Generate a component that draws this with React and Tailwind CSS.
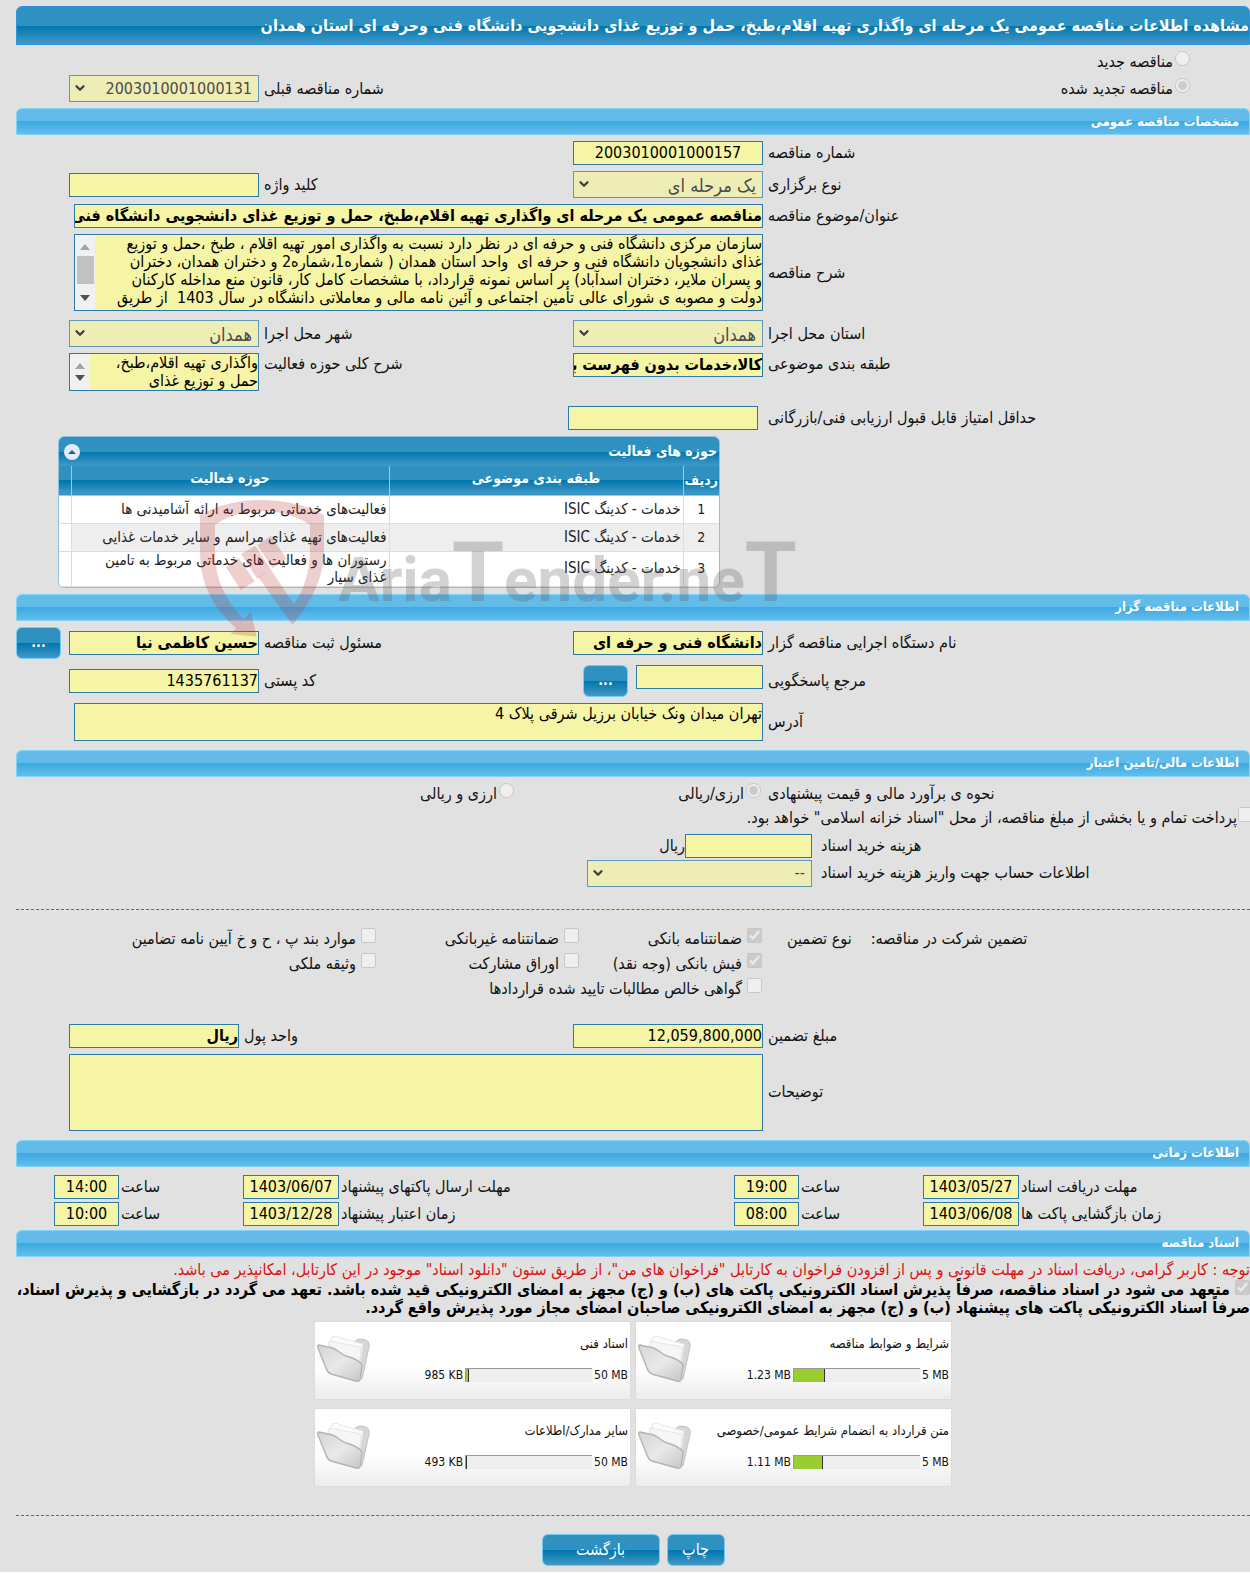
import React from "react";
import { ChevronDown } from "lucide-react";
import clsx from "clsx";

const BAR_BG =
  "bg-[linear-gradient(to_bottom,#63bbea_0%,#63bbea_49%,#3aaae3_50%,#66bdeb_100%)]";
const DARK_BG =
  "bg-[linear-gradient(to_bottom,#2f91c0_0%,#2f91c0_50%,#0076ae_51%,#4399c6_100%)]";

const activities = [
  { id: 1, category: "خدمات - کدینگ ISIC", field: "فعالیت‌های خدماتی مربوط به ارائه آشامیدنی ها" },
  { id: 2, category: "خدمات - کدینگ ISIC", field: "فعالیت‌های تهیه غذای مراسم و سایر خدمات غذایی" },
  { id: 3, category: "خدمات - کدینگ ISIC", field: "رستوران ها و فعالیت های خدماتی مربوط به تامین غذای سیار" },
];

const guarantees = [
  [
    { label: "ضمانتنامه بانکی", checked: true },
    { label: "ضمانتنامه غیربانکی" },
    { label: "موارد بند پ ، ح و خ آیین نامه تضامین" },
  ],
  [
    { label: "فیش بانکی (وجه نقد)", checked: true },
    { label: "اوراق مشارکت" },
    { label: "وثیقه ملکی" },
  ],
  [{ label: "گواهی خالص مطالبات تایید شده قراردادها" }],
];

const schedule = [
  {
    id: "row1",
    first: { label: "مهلت دریافت اسناد", date: "1403/05/27", time: "19:00" },
    second: { label: "مهلت ارسال پاکتهای پیشنهاد", date: "1403/06/07", time: "14:00" },
  },
  {
    id: "row2",
    first: { label: "زمان بازگشایی پاکت ها", date: "1403/06/08", time: "08:00" },
    second: { label: "زمان اعتبار پیشنهاد", date: "1403/12/28", time: "10:00" },
  },
];

const documents = [
  { title: "شرایط و ضوابط مناقصه", max: "5 MB", size: "1.23 MB", percent: 25 },
  { title: "اسناد فنی", max: "50 MB", size: "985 KB", percent: 2 },
  { title: "متن قرارداد به انضمام شرایط عمومی/خصوصی", max: "5 MB", size: "1.11 MB", percent: 23 },
  { title: "سایر مدارک/اطلاعات", max: "50 MB", size: "493 KB", percent: 1 },
];

const SectionBar = ({ children }) => (
  <h2
    className={clsx(
      "flex h-[27px] items-center rounded-t-md border border-[#7fd5f8] pr-[10px] text-[13px] font-bold text-white",
      BAR_BG
    )}
  >
    {children}
  </h2>
);

const Row = ({ className, children }) => (
  <div className={clsx("grid grid-cols-[1fr_190px_314px_190px_53px] items-center", className)}>
    {children}
  </div>
);

const Label = ({ htmlFor, className, children }) => (
  <label htmlFor={htmlFor} className={clsx("pl-[5px] text-left leading-[22px]", className)}>
    {children}
  </label>
);

const TextBox = ({ id, value = "", className }) => (
  <input
    id={id}
    type="text"
    readOnly
    defaultValue={value}
    className={clsx(
      "h-6 min-w-0 border border-[#2a7aab] bg-[#f6f4a5] text-[16px] text-black outline-none",
      className
    )}
  />
);

const Dropdown = ({ id, value, numeric }) => (
  <div className="relative">
    <select
      id={id}
      disabled
      defaultValue={value}
      className={clsx(
        "block h-[27px] w-full appearance-none border border-[#5e97bb] bg-[#efedb6] pr-[6px] text-[#4a4a4a] opacity-100",
        numeric ? "text-[16px]" : "text-[18px]"
      )}
    >
      <option>{value}</option>
    </select>
    <ChevronDown
      className="pointer-events-none absolute top-[6px] left-1 h-[14px] w-[14px] text-[#3f3f3f]"
      strokeWidth={4}
    />
  </div>
);

const ScrollBox = ({ id, value, thumb, className }) => (
  <div className={clsx("flex border border-[#2a7aab] bg-[#f6f4a5]", className)}>
    <textarea
      id={id}
      readOnly
      defaultValue={value}
      className="block min-w-0 flex-1 resize-none overflow-hidden whitespace-pre leading-[18px] text-black outline-none"
    />
    <div className="flex w-[20px] flex-col items-center justify-between bg-[#f1f1f1] py-[9px]">
      <span className="border-x-[5px] border-b-[6px] border-x-transparent border-b-[#a3a3a3]" />
      {thumb && <span className="mb-auto mt-[6px] h-7 w-[17px] bg-[#c1c1c1]" />}
      <span className="border-x-[5px] border-t-[6px] border-x-transparent border-t-[#505050]" />
    </div>
  </div>
);

const Choice = ({ type, name, label, checked, className }) => (
  <label className={clsx("flex items-start whitespace-nowrap leading-[22px]", className)}>
    <input
      type={type}
      name={name}
      disabled
      defaultChecked={checked}
      className="h-[15px] w-[15px] shrink-0"
    />
    {label}
  </label>
);

const DarkButton = ({ className, children, ...props }) => (
  <button
    type="button"
    className={clsx("h-8 rounded-md border border-[#6fcdf5] text-white", DARK_BG, className)}
    {...props}
  >
    {children}
  </button>
);

const FolderIcon = () => (
  <svg viewBox="0 0 54 50" className="h-[50px] w-[54px]" aria-hidden="true">
    <defs>
      <linearGradient id="folderFront" x1="0" y1="0" x2="1" y2="1">
        <stop offset="0" stopColor="#d4d4d4" />
        <stop offset="0.5" stopColor="#e9e9e9" />
        <stop offset="1" stopColor="#c6c6c6" />
      </linearGradient>
    </defs>
    <path d="M37 9 Q39 5 43 5 L49 6 Q53 8 52 13 L45 45 L34 38 Z" fill="#d6d6d6" stroke="#c2c2c2" />
    <path d="M15 3 L20 2 L23 4 L46 10 L42 36 L10 22 Z" fill="#fcfcfc" stroke="#e6e6e6" />
    <path d="M12 7 L44 13 L42 36 L10 26 Z" fill="#f6f6f6" stroke="#e6e6e6" />
    <path
      d="M2 11 L11 13 C21 14 22 20 29 22 C37 24 42 26 45 31 L43 46 Q42 48 39 47 L14 40 Q10 38 9 34 L1 14 Q0 11 2 11 Z"
      fill="url(#folderFront)"
      stroke="#b4b4b4"
      strokeWidth="1.4"
    />
  </svg>
);

const DocumentCard = ({ doc }) => (
  <div className="flex h-[79px] items-start justify-between border border-[#dcdcdc] bg-[linear-gradient(to_bottom,#ffffff_0%,#ffffff_60%,#ececec_100%)] px-[2px] text-[12px]">
    <div className="pt-[12px]">
      <p className="whitespace-nowrap text-[13px] leading-5">{doc.title}</p>
      <div className="mt-[14px] flex items-center gap-[2px] leading-[14px]">
        <span dir="ltr">{doc.max}</span>
        <div dir="ltr" className="h-[14px] w-[127px] border-t border-l border-[#999] bg-[#eee]">
          <div
            className="h-full border-r border-[#333] bg-[#9acd32]"
            style={{ width: `${doc.percent}%` }}
          />
        </div>
        <span dir="ltr">{doc.size}</span>
      </div>
    </div>
    <div className="pt-[12px]">
      <FolderIcon />
    </div>
  </div>
);

const Watermark = () => (
  <div dir="ltr" className="pointer-events-none absolute top-[490px] left-[190px]">
    <svg viewBox="0 0 620 150" className="h-[150px] w-[620px]">
      <g transform="scale(0.3333)" fill="#be3232" fillOpacity="0.24">
        <path d="M30 75 Q110 30 217 30 Q320 30 402 75 L402 190 Q400 290 308 405 L205 262 L242 238 L312 344 Q360 270 360 180 L360 105 Q300 64 217 64 Q130 64 75 105 L75 190 Q75 300 160 387 L182 365 L200 440 L122 432 L138 415 Q30 320 30 190 Z" />
        <path d="M108 232 L146 204 L194 274 L153 300 Z" />
        <path d="M153 192 L196 168 L242 238 L202 266 Z" />
        <path d="M202 166 L242 138 L290 206 L248 234 Z" />
      </g>
      <text
        x="148"
        y="111"
        fill="#5a5a5a"
        fillOpacity="0.27"
        fontFamily="Roboto, 'Liberation Sans', sans-serif"
        fontWeight="bold"
        fontSize="62"
      >
        Aria<tspan fontSize="84">T</tspan>ender.ne<tspan fontSize="84">T</tspan>
      </text>
    </svg>
  </div>
);

const ActivityTable = () => (
  <div className="mr-[530px] ml-[42px] w-[662px] overflow-hidden rounded-md border border-[#8fc0de] bg-white">
    <div className={clsx("flex h-[29px] items-center justify-between pr-[2px] pl-[5px] text-[14px] font-bold text-white", DARK_BG)}>
      <h3>حوزه های فعالیت</h3>
      <button
        type="button"
        aria-label="بستن جدول"
        className="flex h-4 w-4 items-center justify-center rounded-full bg-[#e3ebfa]"
      >
        <span className="border-x-4 border-b-4 border-x-transparent border-b-[#1c5f8a]" />
      </button>
    </div>
    <table className="w-full table-fixed border-collapse text-[15px] text-[#222]">
      <colgroup>
        <col className="w-[36px]" />
        <col className="w-[294px]" />
        <col />
        <col className="w-[12px]" />
      </colgroup>
      <thead>
        <tr className={clsx("h-[29px] border-b border-[#7fd5f8] text-[14px] text-white", DARK_BG)}>
          <th className="overflow-hidden whitespace-nowrap border-l border-[#7fd5f8]">ردیف</th>
          <th className="border-l border-[#7fd5f8] pb-1">طبقه بندی موضوعی</th>
          <th className="border-l border-[#7fd5f8] pb-1">حوزه فعالیت</th>
          <th />
        </tr>
      </thead>
      <tbody>
        {activities.map((item) => (
          <tr key={item.id} className="h-[28px] border-b border-[#ddd] leading-[17px] even:bg-[#eeeeee]">
            <td className="border-l border-[#ddd] text-center text-[14px]">{item.id}</td>
            <td className="border-l border-[#ddd] pr-[2px]">{item.category}</td>
            <td className="border-l border-[#ddd] pr-[2px] pl-5">{item.field}</td>
            <td className="bg-white" />
          </tr>
        ))}
      </tbody>
    </table>
  </div>
);

const ScheduleItem = ({ id, item }) => (
  <>
    <label htmlFor={`${id}-date`} className="pl-[2px] text-left">
      {item.label}
    </label>
    <TextBox id={`${id}-date`} value={item.date} className="text-center" />
    <label htmlFor={`${id}-time`} className="pl-[2px] text-left">
      ساعت
    </label>
    <TextBox id={`${id}-time`} value={item.time} className="text-center" />
  </>
);

const App = () => {
  return (
    <main
      dir="rtl"
      lang="fa"
      className="relative overflow-hidden border-b border-white bg-[#e1e1e1] pt-[6px] pb-[6px] pl-4 font-['DejaVu_Sans_Condensed','DejaVu_Sans',sans-serif] text-[16px] text-[#111]"
    >
      <h1
        className={clsx(
          "flex h-[39px] items-center whitespace-nowrap rounded-t-md border border-[#2b93e0] text-[16px] font-bold text-white",
          DARK_BG
        )}
      >
        مشاهده اطلاعات مناقصه عمومی یک مرحله ای واگذاری تهیه اقلام،طبخ، حمل و توزیع غذای دانشجویی دانشگاه فنی وحرفه ای استان همدان
      </h1>

      <div className="flex flex-col gap-[2px] py-[6px]">
        <Choice type="radio" name="kind" label="مناقصه جدید" className="gap-[2px] pr-[60px]" />
        <Row>
          <Choice type="radio" name="kind" label="مناقصه تجدید شده" checked className="gap-[2px] pr-[60px]" />
          <span />
          <Label htmlFor="prev">شماره مناقصه قبلی</Label>
          <Dropdown id="prev" value="2003010001000131" numeric />
        </Row>
      </div>

      <SectionBar>مشخصات مناقصه عمومی</SectionBar>
      <div className="flex flex-col gap-[6px] py-[6px]">
        <Row>
          <Label htmlFor="number">شماره مناقصه</Label>
          <TextBox id="number" value="2003010001000157" className="text-center" />
        </Row>
        <Row>
          <Label htmlFor="method">نوع برگزاری</Label>
          <Dropdown id="method" value="یک مرحله ای" />
          <Label htmlFor="keyword">کلید واژه</Label>
          <TextBox id="keyword" />
        </Row>
        <Row>
          <Label htmlFor="subject">عنوان/موضوع مناقصه</Label>
          <TextBox
            id="subject"
            value="مناقصه عمومی یک مرحله ای واگذاری تهیه اقلام،طبخ، حمل و توزیع غذای دانشجویی دانشگاه فنی وحرفه ای استان همدان"
            className="col-span-3 ml-[5px] font-bold"
          />
        </Row>
        <Row>
          <Label htmlFor="description">شرح مناقصه</Label>
          <ScrollBox
            id="description"
            thumb
            value={
              "سازمان مرکزی دانشگاه فنی و حرفه ای در نظر دارد نسبت به واگذاری امور تهیه اقلام ، طبخ ،حمل و توزیع\nغذای دانشجویان دانشگاه فنی و حرفه ای  واحد استان همدان ( شماره1،شماره2 و دختران همدان، دختران\nو پسران ملایر، دختران اسدآباد) بر اساس نمونه قرارداد، با مشخصات کامل کار، قانون منع مداخله کارکنان\nدولت و مصوبه ی شورای عالی تأمین اجتماعی و آئین نامه مالی و معاملاتی دانشگاه در سال 1403  از طریق"
            }
            className="col-span-3 ml-[5px] h-[77px]"
          />
        </Row>
        <Row className="mt-[3px]">
          <Label htmlFor="province">استان محل اجرا</Label>
          <Dropdown id="province" value="همدان" />
          <Label htmlFor="city">شهر محل اجرا</Label>
          <Dropdown id="city" value="همدان" />
        </Row>
        <Row className="items-start">
          <Label htmlFor="classification">طبقه بندی موضوعی</Label>
          <TextBox id="classification" value="کالا،خدمات بدون فهرست بها" className="font-bold" />
          <Label htmlFor="scope">شرح کلی حوزه فعالیت</Label>
          <ScrollBox id="scope" value={"واگذاری تهیه اقلام،طبخ،\nحمل و توزیع غذای"} className="h-[38px]" />
        </Row>
        <Row className="mt-[9px]">
          <Label htmlFor="score">حداقل امتیاز قابل قبول ارزیابی فنی/بازرگانی</Label>
          <TextBox id="score" className="mr-[5px] -ml-[5px]" />
        </Row>
        <ActivityTable />
      </div>

      <SectionBar>اطلاعات مناقصه گزار</SectionBar>
      <div className="flex flex-col gap-[6px] pt-[6px] pb-[9px]">
        <Row>
          <Label htmlFor="agency">نام دستگاه اجرایی مناقصه گزار</Label>
          <TextBox id="agency" value="دانشگاه فنی و حرفه ای" className="font-bold" />
          <Label htmlFor="registrar">مسئول ثبت مناقصه</Label>
          <TextBox id="registrar" value="حسین کاظمی نیا" className="font-bold" />
          <DarkButton className="mr-2 text-[14px] font-bold" aria-label="انتخاب مسئول">
            ...
          </DarkButton>
        </Row>
        <Row>
          <Label htmlFor="contact">مرجع پاسخگویی</Label>
          <div className="flex items-start gap-2">
            <TextBox id="contact" className="w-[127px]" />
            <DarkButton className="w-[45px] text-[14px] font-bold" aria-label="انتخاب مرجع">
              ...
            </DarkButton>
          </div>
          <Label htmlFor="postal">کد پستی</Label>
          <TextBox id="postal" value="1435761137" />
        </Row>
        <Row>
          <Label htmlFor="address">آدرس</Label>
          <textarea
            id="address"
            readOnly
            defaultValue="تهران میدان ونک خیابان برزیل شرقی پلاک 4"
            className="col-span-3 ml-[5px] block h-[38px] resize-none border border-[#2a7aab] bg-[#f6f4a5] leading-5 text-black outline-none"
          />
        </Row>
      </div>

      <SectionBar>اطلاعات مالی/تامین اعتبار</SectionBar>
      <div className="flex pt-[6px]">
        <span className="flex-1 pl-[5px] text-left leading-[22px]">نحوه ی برآورد مالی و قیمت پیشنهادی</span>
        <Choice type="radio" name="currency" label="ارزی/ریالی" checked className="w-[249px] gap-[2px] pr-[2px]" />
        <Choice type="radio" name="currency" label="ارزی و ریالی" className="w-[498px] gap-[2px]" />
      </div>
      <Choice
        type="checkbox"
        label={'پرداخت تمام و یا بخشی از مبلغ مناقصه، از محل "اسناد خزانه اسلامی" خواهد بود.'}
        className="-mr-[3px] mt-[2px] gap-px"
      />
      <div className="mt-[5px] grid grid-cols-[1fr_225px_571px] items-center gap-y-[2px]">
        <Label htmlFor="cost" className="pl-[9px]">
          هزینه خرید اسناد
        </Label>
        <TextBox id="cost" className="w-[127px]" />
        <span className="-mr-[98px]">ریال</span>
        <Label htmlFor="account" className="pl-[9px]">
          اطلاعات حساب جهت واریز هزینه خرید اسناد
        </Label>
        <Dropdown id="account" value="--" numeric />
      </div>

      <hr className="mt-[22px] border-t border-dashed border-[#2a7aa0]" />

      <div className="flex pt-[18px]">
        <div className="flex flex-1 justify-end gap-[19px] pl-[23px] leading-[22px]">
          <span>تضمین شرکت در مناقصه:</span>
          <span>نوع تضمین</span>
        </div>
        <div className="w-[748px]">
          {guarantees.map((group) => (
            <div key={group[0].label} className="grid h-[25px] grid-cols-[183px_203px_1fr]">
              {group.map((item) => (
                <Choice
                  key={item.label}
                  type="checkbox"
                  label={item.label}
                  checked={item.checked}
                  className="gap-[5px] pr-[2px]"
                />
              ))}
            </div>
          ))}
        </div>
      </div>

      <div className="flex flex-col gap-[6px] pt-[21px] pb-[9px]">
        <div className="grid grid-cols-[1fr_190px_334px_170px_53px] items-center">
          <Label htmlFor="amount">مبلغ تضمین</Label>
          <TextBox id="amount" value="12,059,800,000" />
          <Label htmlFor="unit">واحد پول</Label>
          <TextBox id="unit" value="ریال" className="font-bold" />
        </div>
        <Row>
          <Label htmlFor="notes">توضیحات</Label>
          <textarea
            id="notes"
            readOnly
            className="col-span-3 block h-[77px] resize-none border border-[#2a7aab] bg-[#f6f4a5] outline-none"
          />
        </Row>
      </div>

      <SectionBar>اطلاعات زمانی</SectionBar>
      <div className="flex flex-col gap-[3px] pt-[8px] pb-[4px]">
        {schedule.map((item) => (
          <div
            key={item.id}
            className="grid grid-cols-[1fr_96px_124px_65px_395px_96px_124px_65px_38px] items-center leading-6"
          >
            <ScheduleItem id={`${item.id}-a`} item={item.first} />
            <ScheduleItem id={`${item.id}-b`} item={item.second} />
          </div>
        ))}
      </div>

      <SectionBar>اسناد مناقصه</SectionBar>
      <p className="mt-[3px] whitespace-nowrap leading-5 text-[#dd1111]">
        توجه : کاربر گرامی، دریافت اسناد در مهلت قانونی و پس از افزودن فراخوان به کارتابل "فراخوان های من"، از طریق ستون "دانلود اسناد" موجود در این کارتابل، امکانپذیر می باشد.
      </p>
      <label className="block font-bold leading-[18px] text-black">
        <input type="checkbox" disabled defaultChecked className="ml-[5px] h-[15px] w-[15px]" />
        متعهد می شود در اسناد مناقصه، صرفاً پذیرش اسناد الکترونیکی پاکت های (ب) و (ج) مجهز به امضای الکترونیکی قید شده باشد. تعهد می گردد در بازگشایی و پذیرش اسناد، صرفاً اسناد الکترونیکی پاکت های پیشنهاد (ب) و (ج) مجهز به امضای الکترونیکی صاحبان امضای مجاز مورد پذیرش واقع گردد.
      </label>

      <div className="mt-[4px] grid grid-cols-[317px_317px] justify-center gap-x-[4px] gap-y-[8px]">
        {documents.map((doc) => (
          <DocumentCard key={doc.title} doc={doc} />
        ))}
      </div>

      <hr className="mt-[28px] border-t border-dashed border-[#2a7aa0]" />

      <div className="flex justify-center gap-[7px] pt-[18px]">
        <DarkButton className="w-[58px]">چاپ</DarkButton>
        <DarkButton className="w-[118px]">بازگشت</DarkButton>
      </div>

      <Watermark />
    </main>
  );
};

export default App;
